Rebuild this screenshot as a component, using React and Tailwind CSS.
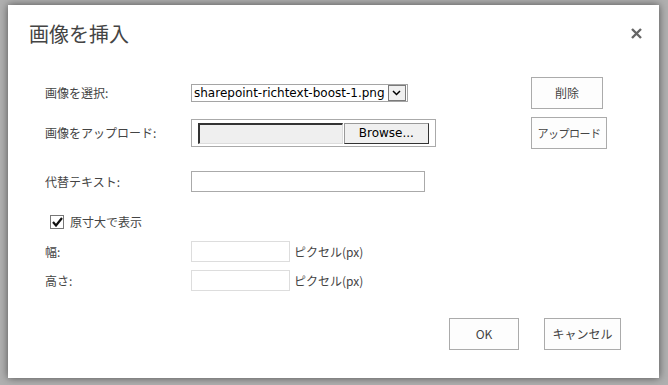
import React from "react";

const jp = { fontFamily: '"Noto Sans CJK JP", "Noto Sans", sans-serif' };
const verdana = { fontFamily: '"DejaVu Sans", "Noto Sans", sans-serif' };

const Label = ({ children }) => (
  <div className="text-[12px] text-[#444] leading-none" style={jp}>
    {children}
  </div>
);

const SideButton = ({ children, w, size = "text-[12px]" }) => (
  <button
    className={`${w} ${size} h-[32px] border border-[#ababab] bg-[#fdfdfd] text-[#444] whitespace-nowrap`}
    style={jp}
  >
    {children}
  </button>
);

const App = () => {
  return (
    <div className="w-[668px] h-[385px] bg-[#b0b0b0] pt-[5px] pl-[8px] overflow-hidden">
      <div className="relative w-[651px] h-[373px] bg-white shadow-[0_0_8px_rgba(0,0,0,0.55)]">
        {/* header */}
        <div className="flex items-start justify-between pl-[21px] pr-[17px] pt-[19px]">
          <h1 className="text-[20px] text-[#444] leading-none" style={jp}>
            画像を挿入
          </h1>
          <svg width="11" height="11" viewBox="0 0 11 11" className="mt-[4px]">
            <path d="M1 1 L10 10 M10 1 L1 10" stroke="#666" strokeWidth="2.4" />
          </svg>
        </div>

        {/* form */}
        <div className="grid grid-cols-[146px_340px_auto] pl-[37px] mt-[33px]">
          {/* row 1 */}
          <div className="h-[32px] flex items-center">
            <Label>画像を選択:</Label>
          </div>
          <div className="h-[32px] flex items-center">
            <div className="flex items-center h-[18px] border border-[#a5a5a5] bg-white">
              <span className="text-[12px] text-black leading-none pl-[2px] pr-[3px]" style={verdana}>
                sharepoint-richtext-boost-1.png
              </span>
              <span className="w-[18px] h-[16px] border border-[#7a7a7a] bg-[#f0f0f0] flex items-center justify-center mr-[1px]">
                <svg width="9" height="6" viewBox="0 0 9 6">
                  <path d="M1 1 L4.5 4.5 L8 1" stroke="#000" strokeWidth="1.5" fill="none" />
                </svg>
              </span>
            </div>
          </div>
          <div className="h-[32px] flex items-center">
            <SideButton w="w-[72px]">削除</SideButton>
          </div>

          {/* row 2 */}
          <div className="h-[32px] mt-[8px] flex items-center">
            <Label>画像をアップロード:</Label>
          </div>
          <div className="h-[32px] mt-[8px] flex items-center">
            <div className="flex items-center w-[245px] h-[28px] border border-[#aaa] bg-white px-[6px] gap-[1px]">
              <div className="w-[146px] h-[21px] bg-[#efefef] border-t-2 border-l-2 border-t-[#333] border-l-[#333] border-b border-r border-b-[#ddd] border-r-[#ddd]" />
              <div
                className="w-[86px] h-[21px] bg-[#f0f0f0] border border-[#999] border-r-[#333] border-b-[#333] flex items-center justify-center text-[12px] text-black"
                style={verdana}
              >
                Browse...
              </div>
            </div>
          </div>
          <div className="h-[32px] mt-[8px] flex items-center">
            <SideButton w="w-[76px]" size="text-[11px] tracking-[-0.5px]">
              アップロード
            </SideButton>
          </div>

          {/* alt text */}
          <div className="h-[21px] mt-[22px] flex items-center">
            <Label>代替テキスト:</Label>
          </div>
          <div className="h-[21px] mt-[22px] flex items-center">
            <div className="w-[234px] h-[21px] border border-[#aaa] bg-white" />
          </div>
          <div className="mt-[22px]" />

          {/* keep aspect */}
          <div className="col-span-3 h-[14px] mt-[23px] flex items-center pl-[5px] gap-[6px]">
            <div className="w-[14px] h-[14px] border border-[#777] bg-white flex items-center justify-center">
              <svg width="11" height="10" viewBox="0 0 11 10">
                <path d="M1 5 L4 8.5 L10 1" stroke="#111" strokeWidth="2.2" fill="none" />
              </svg>
            </div>
            <Label>原寸大で表示</Label>
          </div>

          {/* width */}
          <div className="h-[21px] mt-[12px] flex items-center">
            <Label>幅:</Label>
          </div>
          <div className="h-[21px] mt-[12px] flex items-center gap-[4px]">
            <div className="w-[99px] h-[21px] border border-[#ddd] bg-white" />
            <Label>ピクセル(px)</Label>
          </div>
          <div className="mt-[12px]" />

          {/* height */}
          <div className="h-[21px] mt-[8px] flex items-center">
            <Label>高さ:</Label>
          </div>
          <div className="h-[21px] mt-[8px] flex items-center gap-[4px]">
            <div className="w-[99px] h-[21px] border border-[#ddd] bg-white" />
            <Label>ピクセル(px)</Label>
          </div>
          <div className="mt-[8px]" />
        </div>

        {/* footer */}
        <div className="flex justify-end gap-[25px] pr-[38px] mt-[27px]">
          <button
            className="w-[70px] h-[32px] border border-[#ababab] bg-[#fdfdfd] text-[12px] text-[#444]"
            style={jp}
          >
            OK
          </button>
          <button
            className="w-[77px] h-[32px] border border-[#ababab] bg-[#fdfdfd] text-[12px] text-[#444]"
            style={jp}
          >
            キャンセル
          </button>
        </div>
      </div>
    </div>
  );
};

export default App;
